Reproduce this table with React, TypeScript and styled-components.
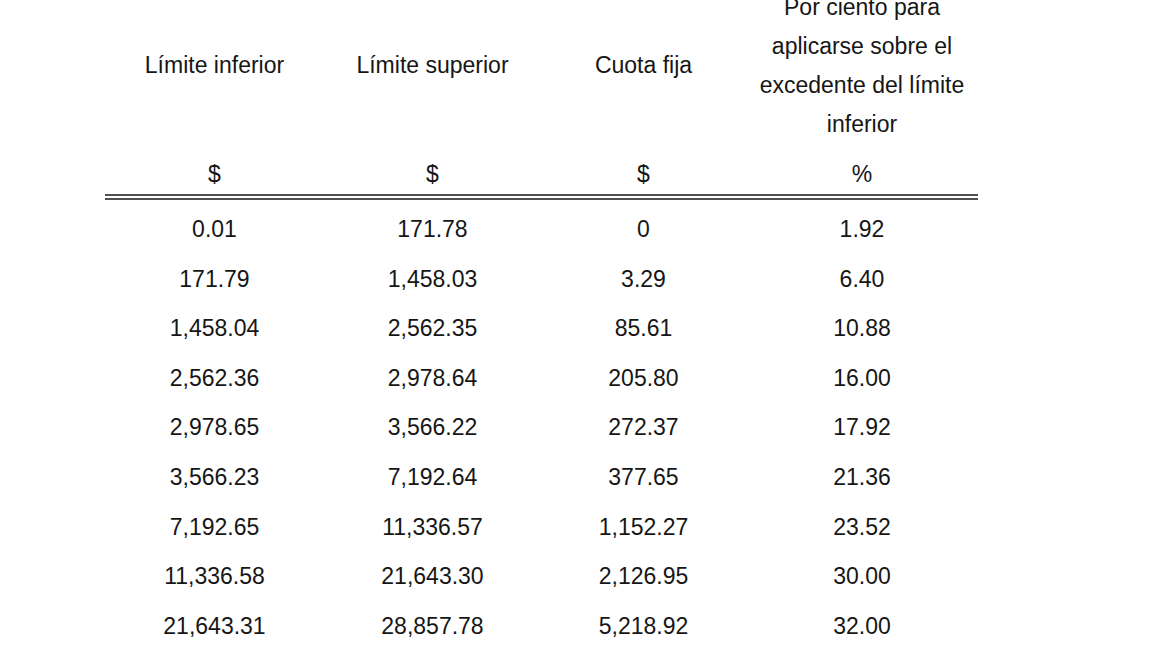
import React from "react";
import styled, { createGlobalStyle } from "styled-components";

const Global = createGlobalStyle`
  html, body {
    margin: 0;
    padding: 0;
    background: #ffffff;
  }
  body {
    font-family: "Liberation Sans", Arial, sans-serif;
    overflow: hidden;
  }
`;

const Page = styled.div`
  width: 1152px;
  height: 648px;
  padding-left: 105px;
  box-sizing: border-box;
  overflow: hidden;
`;

const Table = styled.table`
  margin-top: -12.5px;
  width: 873px;
  table-layout: fixed;
  border-collapse: separate;
  border-spacing: 0;
  font-family: "Liberation Sans", Arial, sans-serif;
  font-size: 23px;
  color: #161616;
`;

const HeadCell = styled.th`
  font-weight: normal;
  text-align: center;
  vertical-align: middle;
  line-height: 39px;
  padding: 0;
  height: 156px;
`;

const UnitCell = styled.th`
  font-weight: normal;
  text-align: center;
  line-height: 39px;
  padding: 11px 0 0;
  border-bottom: 6px double #505050;
`;

const Cell = styled.td<{ $first?: boolean }>`
  text-align: center;
  line-height: 49.6px;
  padding: ${(p) => (p.$first ? "5.5px 0 0" : "0")};
  white-space: nowrap;
`;

const rows: string[][] = [
  ["0.01", "171.78", "0", "1.92"],
  ["171.79", "1,458.03", "3.29", "6.40"],
  ["1,458.04", "2,562.35", "85.61", "10.88"],
  ["2,562.36", "2,978.64", "205.80", "16.00"],
  ["2,978.65", "3,566.22", "272.37", "17.92"],
  ["3,566.23", "7,192.64", "377.65", "21.36"],
  ["7,192.65", "11,336.57", "1,152.27", "23.52"],
  ["11,336.58", "21,643.30", "2,126.95", "30.00"],
  ["21,643.31", "28,857.78", "5,218.92", "32.00"],
];

export default function App() {
  return (
    <>
      <Global />
      <Page>
        <Table>
          <colgroup>
            <col style={{ width: 219 }} />
            <col style={{ width: 217 }} />
            <col style={{ width: 205 }} />
            <col style={{ width: 232 }} />
          </colgroup>
          <thead>
            <tr>
              <HeadCell>Límite inferior</HeadCell>
              <HeadCell>Límite superior</HeadCell>
              <HeadCell>Cuota fija</HeadCell>
              <HeadCell>
                Por ciento para
                <br />
                aplicarse sobre el
                <br />
                excedente del límite
                <br />
                inferior
              </HeadCell>
            </tr>
            <tr>
              <UnitCell>$</UnitCell>
              <UnitCell>$</UnitCell>
              <UnitCell>$</UnitCell>
              <UnitCell>%</UnitCell>
            </tr>
          </thead>
          <tbody>
            {rows.map((r, i) => (
              <tr key={i}>
                {r.map((v, j) => (
                  <Cell key={j} $first={i === 0}>
                    {v}
                  </Cell>
                ))}
              </tr>
            ))}
          </tbody>
        </Table>
      </Page>
    </>
  );
}
